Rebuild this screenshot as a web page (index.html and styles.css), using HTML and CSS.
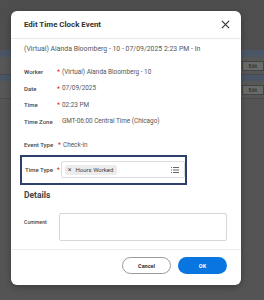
FILE: index.html
```html
<!DOCTYPE html>
<html lang="en">
<head>
    <meta charset="UTF-8">
    <title>Edit Time Clock Event</title>
    <link rel="stylesheet" href="styles.css">
</head>
<body>
    <!-- Page behind the overlay -->
    <div class="backdrop">
        <div class="bg-top"></div>
        <div class="bg-band"></div>
        <div class="bg-row"><span class="bg-edit">Edit</span></div>
        <div class="bg-band thin"></div>
        <div class="bg-row"><span class="bg-edit">Edit</span></div>
        <div class="bg-rest"></div>
    </div>

    <!-- Modal dialog -->
    <div class="modal">
        <div class="modal-header">
            <h1>Edit Time Clock Event</h1>
            <svg class="close" width="9" height="9" viewBox="0 0 10 10">
                <path d="M1 1L9 9M9 1L1 9" stroke="#333" stroke-width="1.3" fill="none"/>
            </svg>
        </div>

        <div class="modal-body">
            <p class="subtitle">(Virtual) Alanda Bloomberg - 10 - 07/09/2025 2:23 PM - In</p>

            <div class="fields">
                <div class="field"><span class="label">Worker</span><span class="req">*</span><span class="value">(Virtual) Alanda Bloomberg - 10</span></div>
                <div class="field"><span class="label">Date</span><span class="req">*</span><span class="value">07/09/2025</span></div>
                <div class="field"><span class="label">Time</span><span class="req">*</span><span class="value">02:23 PM</span></div>
                <div class="field"><span class="label">Time Zone</span><span class="req"></span><span class="value">GMT-06:00 Central Time (Chicago)</span></div>
            </div>

            <div class="field event"><span class="label">Event Type</span><span class="req">*</span><span class="value">Check-in</span></div>

            <div class="highlight">
                <span class="label">Time Type</span><span class="req">*</span>
                <div class="select">
                    <span class="pill"><span class="x">&#215;</span>Hours Worked</span>
                    <svg class="list-icon" width="8" height="6" viewBox="0 0 8 6">
                        <rect x="0" y="0" width="1" height="1" fill="#666"/>
                        <rect x="2" y="0" width="6" height="1" fill="#666"/>
                        <rect x="0" y="2.5" width="1" height="1" fill="#666"/>
                        <rect x="2" y="2.5" width="6" height="1" fill="#666"/>
                        <rect x="0" y="5" width="1" height="1" fill="#666"/>
                        <rect x="2" y="5" width="6" height="1" fill="#666"/>
                    </svg>
                </div>
            </div>

            <h2>Details</h2>

            <div class="comment">
                <span class="label">Comment</span>
                <div class="textarea"></div>
            </div>
        </div>

        <div class="modal-footer">
            <button class="btn cancel">Cancel</button>
            <button class="btn ok">OK</button>
        </div>
    </div>
</body>
</html>
```

FILE: styles.css
```css
/* General page */
body {
    margin: 0;
    width: 264px;
    height: 300px;
    overflow: hidden;
    font-family: Roboto, "Liberation Sans", sans-serif;
    background-color: #545454;
    position: relative;
}

/* Dimmed page behind the dialog */
.backdrop {
    display: flex;
    flex-direction: column;
    height: 300px;
}

.bg-top {
    height: 50px;
    background-color: #4e4e4e;
}

.bg-band {
    height: 7px;
    background-color: #4a5665;
}

.bg-band.thin {
    height: 6px;
}

.bg-row {
    height: 17px;
    background-color: #575757;
    display: flex;
    justify-content: flex-end;
    align-items: center;
    border-bottom: 1px solid #4a4a4a;
}

.bg-edit {
    font-size: 5px;
    color: #222;
    background-color: #6a6a6a;
    border: 1px solid #444;
    padding: 1px 6px;
}

.bg-rest {
    flex: 1;
    background-color: #545454;
}

/* Dialog */
.modal {
    position: absolute;
    left: 11px;
    top: 11px;
    width: 230px;
    height: 274px;
    background-color: #fff;
    border-radius: 6px;
    box-shadow: 0 2px 6px rgba(0, 0, 0, 0.3);
    display: flex;
    flex-direction: column;
}

.modal-header {
    display: flex;
    justify-content: space-between;
    align-items: center;
    height: 27px;
    padding: 0 11px 0 13px;
    border-bottom: 1px solid #e8e8e8;
}

h1 {
    margin: 0;
    font-size: 7.9px;
    font-weight: 700;
    color: #333;
}

.modal-body {
    flex: 1;
    padding: 0 13px;
}

.subtitle {
    margin: 6px 0 0;
    font-size: 6.9px;
    color: #555;
}

.fields {
    margin-top: 15px;
    display: flex;
    flex-direction: column;
    gap: 9px;
}

.field {
    display: flex;
    align-items: center;
    height: 7.5px;
}

.label {
    width: 33px;
    font-size: 6px;
    font-weight: 500;
    color: #444;
}

.req {
    width: 5px;
    color: #e0312f;
    font-size: 7px;
    line-height: 7px;
    padding-top: 2px;
}

.value {
    font-size: 6.4px;
    color: #555;
}

.event {
    margin-top: 16px;
}

.event .label {
    width: 34px;
}

/* Highlighted Time Type field */
.highlight {
    margin: 6px 0 0 -4px;
    width: 160px;
    height: 26px;
    border: 2px solid #2f3f6b;
    display: flex;
    align-items: center;
    padding-left: 3px;
}

.highlight .label {
    width: 32px;
}

.highlight .req {
    width: 4px;
}

.select {
    width: 115px;
    height: 15px;
    border: 1px solid #ddd;
    border-radius: 2px;
    display: flex;
    align-items: center;
    justify-content: space-between;
    padding: 0 5px 0 3px;
}

.pill {
    background-color: #ececec;
    border-radius: 2px;
    font-size: 6px;
    color: #444;
    padding: 1px 4px 1px 3px;
    display: flex;
    align-items: center;
}

.x {
    font-size: 7px;
    margin-right: 4px;
    color: #555;
}

h2 {
    margin: 5px 0 0;
    font-size: 8.5px;
    font-weight: 700;
    color: #444;
}

.comment {
    display: flex;
    align-items: flex-start;
    margin-top: 13px;
}

.comment .label {
    width: 35px;
    font-size: 5.2px;
    padding-top: 6px;
}

.textarea {
    width: 166px;
    height: 26px;
    border: 1px solid #d6d6d6;
    border-radius: 2px;
}

.modal-footer {
    display: flex;
    justify-content: flex-end;
    gap: 7px;
    padding: 7px 14px 5px;
    height: 18px;
    border-top: 1px solid #ececec;
    margin-bottom: 5px;
}

.btn {
    width: 49px;
    height: 17px;
    border-radius: 9px;
    font-family: Roboto, "Liberation Sans", sans-serif;
    font-size: 5.5px;
    font-weight: 700;
    padding: 0;
}

.cancel {
    background-color: #fff;
    border: 1px solid #999;
    color: #333;
}

.ok {
    background-color: #0875e1;
    border: none;
    color: #fff;
}
```
